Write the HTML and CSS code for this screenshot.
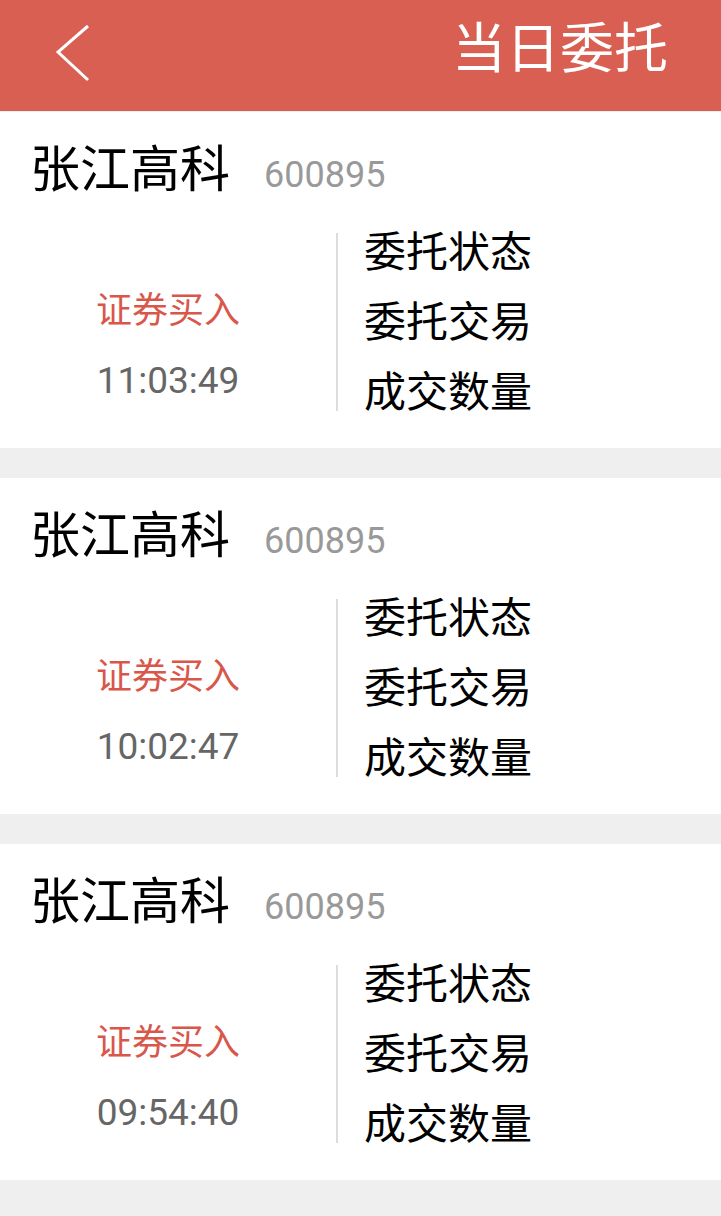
FILE: index.html
```html
<!DOCTYPE html>
<html lang="zh-CN">
<head>
    <meta charset="UTF-8">
    <meta name="viewport" content="width=device-width, initial-scale=1.0">
    <title>当日委托</title>
    <link rel="stylesheet" href="styles.css">
</head>
<body>
    <header class="topbar">
        <a class="back" href="#">
            <svg width="36" height="60" viewBox="0 0 36 60">
                <polyline points="33,3 3,29 33,57" fill="none" stroke="#fff" stroke-width="3"/>
            </svg>
        </a>
        <h1>当日委托</h1>
    </header>
    <main class="list">
        <div class="order">
            <div class="order-head">
                <span class="stock-name">张江高科</span>
                <span class="stock-code">600895</span>
            </div>
            <div class="order-body">
                <div class="order-left">
                    <div class="order-type">证券买入</div>
                    <div class="order-time">11:03:49</div>
                </div>
                <div class="divider"></div>
                <div class="order-right">
                    <div>委托状态</div>
                    <div>委托交易</div>
                    <div>成交数量</div>
                </div>
            </div>
        </div>
        <div class="order">
            <div class="order-head">
                <span class="stock-name">张江高科</span>
                <span class="stock-code">600895</span>
            </div>
            <div class="order-body">
                <div class="order-left">
                    <div class="order-type">证券买入</div>
                    <div class="order-time">10:02:47</div>
                </div>
                <div class="divider"></div>
                <div class="order-right">
                    <div>委托状态</div>
                    <div>委托交易</div>
                    <div>成交数量</div>
                </div>
            </div>
        </div>
        <div class="order">
            <div class="order-head">
                <span class="stock-name">张江高科</span>
                <span class="stock-code">600895</span>
            </div>
            <div class="order-body">
                <div class="order-left">
                    <div class="order-type">证券买入</div>
                    <div class="order-time">09:54:40</div>
                </div>
                <div class="divider"></div>
                <div class="order-right">
                    <div>委托状态</div>
                    <div>委托交易</div>
                    <div>成交数量</div>
                </div>
            </div>
        </div>
    </main>
</body>
</html>
```

FILE: styles.css
```css
body {
    margin: 0;
    padding: 0;
    background-color: #efefef;
    font-family: Roboto, "Noto Sans CJK SC", sans-serif;
    color: #000;
}
.topbar {
    height: 111px;
    background-color: #d95f52;
    display: flex;
    align-items: center;
    justify-content: space-between;
    padding: 0 53px 0 55px;
}
.back {
    display: flex;
    margin-top: -6px;
}
.topbar h1 {
    margin: 0;
    color: #fff;
    font-size: 54px;
    font-weight: normal;
    line-height: 1;
    margin-top: -12px;
}
.list {
    display: flex;
    flex-direction: column;
    gap: 30px;
    padding-top: 1px;
}
.order {
    background-color: #fff;
    height: 336px;
}
.order-head {
    padding: 12px 0 0 30px;
    height: 93px;
    line-height: 93px;
}
.stock-name {
    font-size: 50px;
    margin-right: 30px;
}
.stock-code {
    font-size: 36px;
    color: #999;
}
.order-body {
    display: flex;
}
.order-left {
    width: 336px;
    padding-top: 59px;
    text-align: center;
    line-height: 70px;
}
.order-type {
    font-size: 36px;
    color: #d9574a;
}
.order-time {
    font-size: 37px;
    color: #666;
}
.divider {
    width: 2px;
    height: 178px;
    margin-top: 16px;
    background-color: #ddd;
}
.order-right {
    padding-left: 26px;
    padding-top: 1px;
    font-size: 42px;
    line-height: 70px;
}
```
